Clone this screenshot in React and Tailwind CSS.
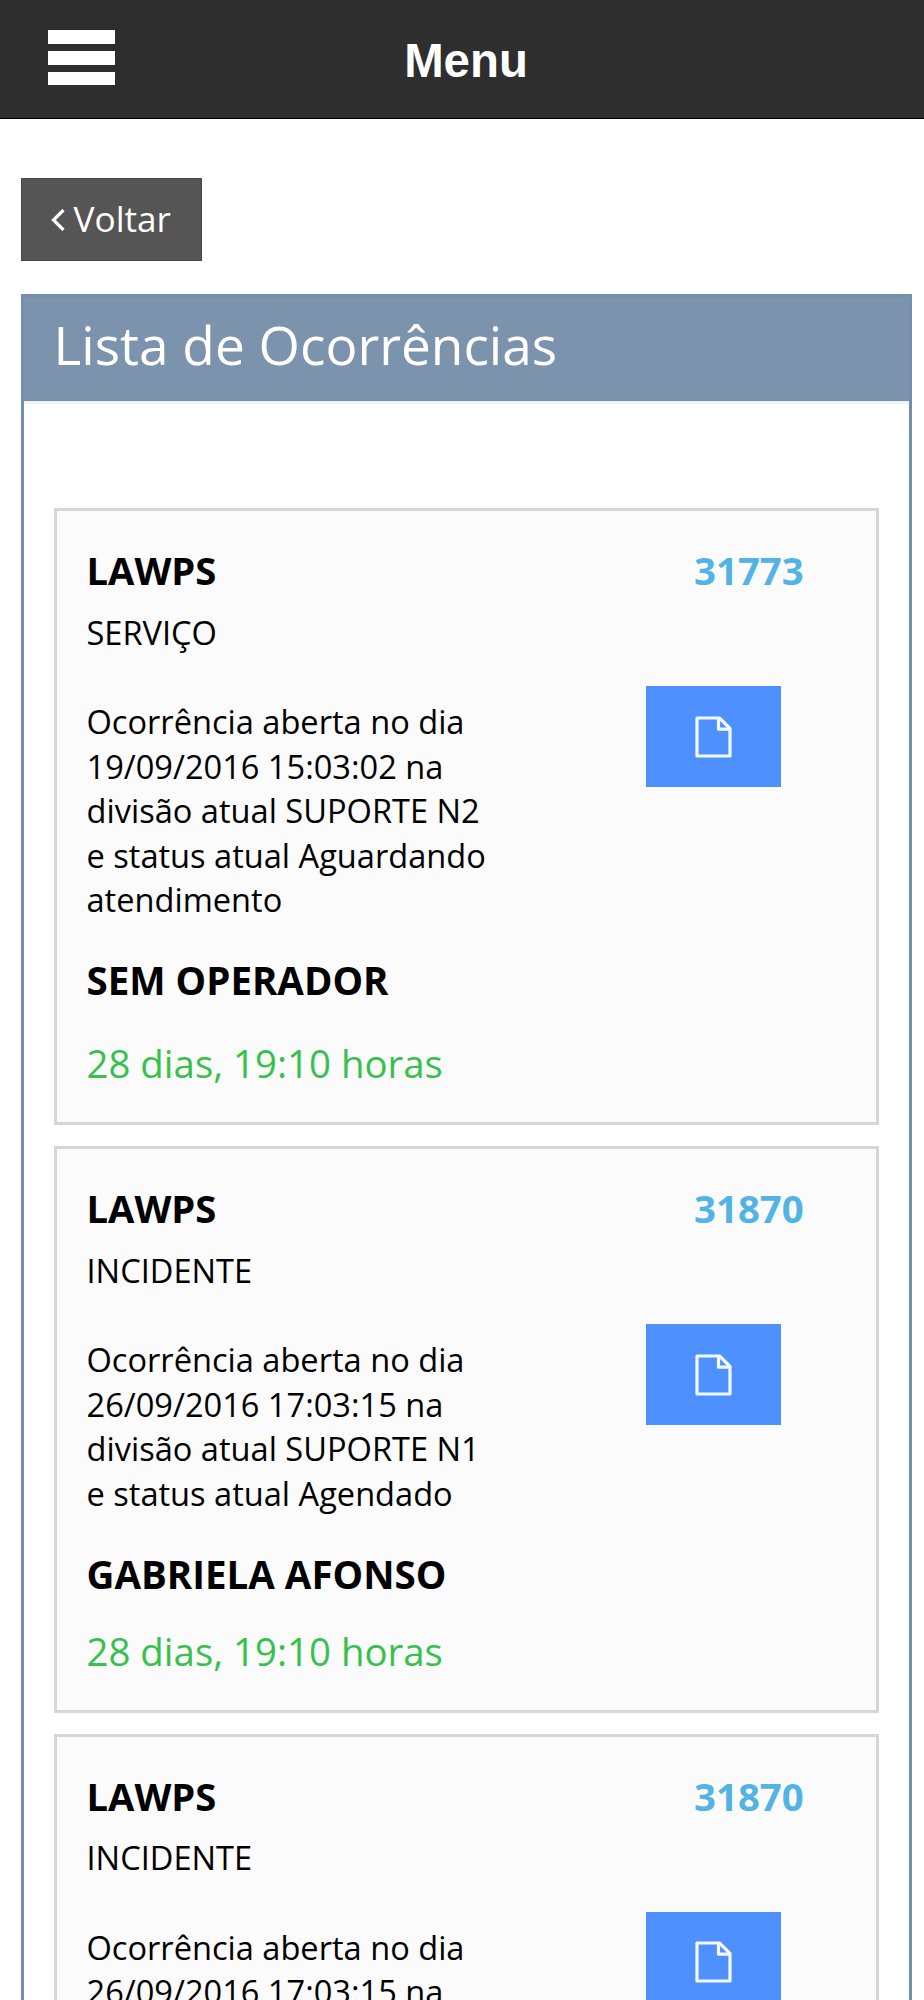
import React, { useState } from "react";

const occurrences = [
  {
    company: "LAWPS",
    number: "31773",
    type: "SERVIÇO",
    opened: "19/09/2016 15:03:02",
    division: "SUPORTE N2",
    status: "Aguardando atendimento",
    operator: null,
    time: "28 dias, 19:10 horas",
  },
  {
    company: "LAWPS",
    number: "31870",
    type: "INCIDENTE",
    opened: "26/09/2016 17:03:15",
    division: "SUPORTE N1",
    status: "Agendado",
    operator: "GABRIELA AFONSO",
    time: "28 dias, 19:10 horas",
  },
  {
    company: "LAWPS",
    number: "31870",
    type: "INCIDENTE",
    opened: "26/09/2016 17:03:15",
    division: "SUPORTE N1",
    status: "Agendado",
    operator: "GABRIELA AFONSO",
    time: "28 dias, 19:10 horas",
  },
];

const FileIcon = () => (
  <svg
    width="37"
    height="42"
    viewBox="0 0 37 42"
    fill="none"
    stroke="#f4f8ff"
    strokeWidth="3.2"
    strokeLinejoin="round"
  >
    <path d="M2 2H24.5L35 12.5V40H2Z" />
    <path d="M23.5 2V13.2H35" />
  </svg>
);

const TopBar = ({ toggle }) => (
  <header className="flex h-[118.5px] items-center border-b border-black bg-[#2e2e2e] pl-[48px]">
    <button className="mb-[2px] flex w-[67px] flex-col gap-[7px]" onClick={toggle}>
      <span className="h-[13.67px] w-full bg-white" />
      <span className="h-[13.67px] w-full bg-white" />
      <span className="h-[13.67px] w-full bg-white" />
    </button>
    <h1 className="mt-[3px] mr-[107px] flex-1 text-center font-['Liberation_Sans',sans-serif] text-[47.4px] font-bold text-white">
      Menu
    </h1>
  </header>
);

const OccurrenceCard = ({ item }) => (
  <li className="flex border-3 border-[#d6d6d6] bg-[#fbfbfb] pt-8 pb-[31.9px] pl-[29.5px]">
    <div className="w-[410px]">
      <h3 className="text-[38.2px] leading-[54px] font-bold">{item.company}</h3>
      <p className="mt-[13.8px] text-[32.6px] leading-[44.6px]">{item.type}</p>
      <p className="mt-[44.6px] text-[32.6px] leading-[44.6px]">
        Ocorrência aberta no dia {item.opened} na divisão atual {item.division} e
        status atual {item.status}
      </p>
      <h4 className="mt-[30.3px] text-[38.5px] leading-[54px] font-bold">
        {item.operator || "SEM OPERADOR"}
      </h4>
      <p
        className={`${item.operator ? "mt-[23px]" : "mt-[29px]"} text-[38.4px] leading-[54px] text-[#36c14c]`}
      >
        {item.time}
      </p>
    </div>
    <div className="ml-[149.5px]">
      <p className="ml-12 text-[38.4px] leading-[54px] font-bold text-[#53b3e4]">
        {item.number}
      </p>
      <button className="mt-[89px] flex h-[101px] w-[135px] items-center justify-center bg-[#4d90fe]">
        <FileIcon />
      </button>
    </div>
  </li>
);

const App = () => {
  const [open, setOpen] = useState(false);

  return (
    <div className="h-[2000px] overflow-hidden bg-white font-['Open_Sans',sans-serif] text-black">
      <TopBar toggle={() => setOpen(!open)} />
      <main className="pt-[59.5px] pr-3 pl-[21px]">
        <button className="flex h-[83px] w-[181px] items-center border border-[#484848] bg-[#555555] pl-[29px] text-[35.2px] text-white">
          <svg width="14" height="22" viewBox="0 0 14 22" fill="none" stroke="white" strokeWidth="3.2">
            <path d="M12.5 1L2.5 11L12.5 21" />
          </svg>
          <span className="mb-[3px] ml-[8.5px]">Voltar</span>
        </button>
        <section className="mt-[33px] border-3 border-[#728fae] bg-white">
          <h2 className="h-[104px] border-b border-[#728fae] bg-[#7c93ad] pl-[29.5px] text-[53.2px] leading-[96px] text-white">
            Lista de Ocorrências
          </h2>
          <div className="border-t-3 border-[#f2f2f2] px-[30px] pt-[104px]">
            <ul className="flex flex-col gap-[21px]">
              {occurrences.map((item, index) => (
                <OccurrenceCard key={index} item={item} />
              ))}
            </ul>
          </div>
        </section>
      </main>
    </div>
  );
};

export default App;
